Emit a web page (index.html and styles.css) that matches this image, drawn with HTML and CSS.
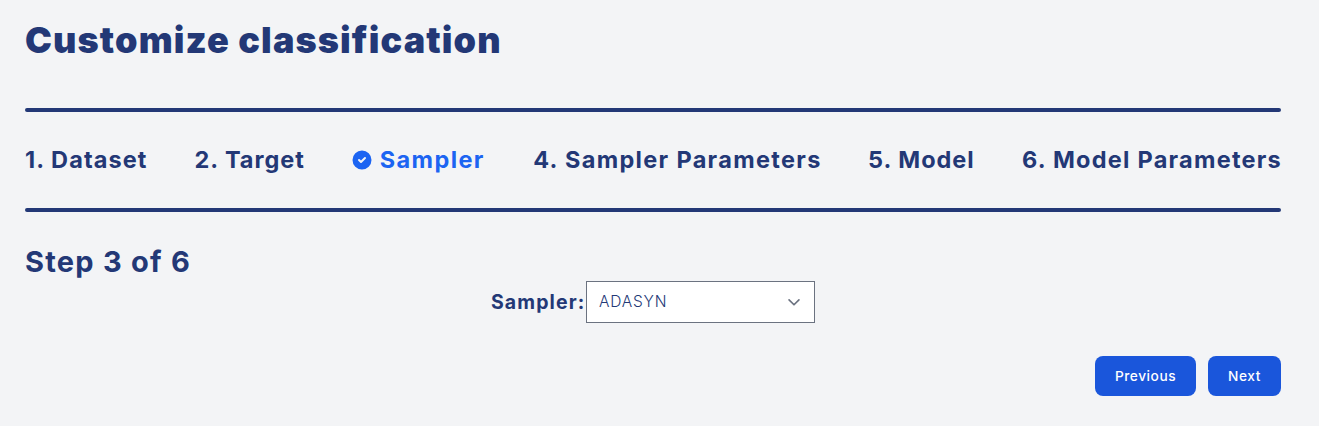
FILE: index.html
```html
<!DOCTYPE html>
<html lang="en">
<head>
<meta charset="utf-8">
<title>Customize classification</title>
<link rel="stylesheet" href="styles.css">
</head>
<body>
<main class="page">
  <h1 class="title">Customize classification</h1>
  <hr class="rule">
  <ol class="stepper">
    <li class="step dataset">1. Dataset</li>
    <li class="step target">2. Target</li>
    <li class="step current">
      <svg class="check" viewBox="0 0 20 20" aria-hidden="true"><path fill="currentColor" d="M10 .5a9.5 9.5 0 1 0 9.5 9.5A9.51 9.51 0 0 0 10 .5Zm3.707 8.207-4 4a1 1 0 0 1-1.414 0l-2-2a1 1 0 0 1 1.414-1.414L9 10.586l3.293-3.293a1 1 0 0 1 1.414 1.414Z"/></svg>
      <span class="name">Sampler</span>
    </li>
    <li class="step sampler-params">4. Sampler Parameters</li>
    <li class="step model">5. Model</li>
    <li class="step model-params">6. Model Parameters</li>
  </ol>
  <hr class="rule">
  <h2 class="progress">Step 3 of 6</h2>
  <div class="field">
    <label class="label" for="sampler">Sampler:</label>
    <div class="select-box">
      <select class="select" id="sampler"><option>ADASYN</option></select>
      <svg class="chevron" viewBox="0 0 20 20" aria-hidden="true"><path fill="none" stroke="#6b7280" stroke-linecap="round" stroke-linejoin="round" stroke-width="1.5" d="m5.5 8 4.5 4.5L14.500 8"/></svg>
    </div>
  </div>
  <div class="actions">
    <button class="button previous" type="button">Previous</button>
    <button class="button next" type="button">Next</button>
  </div>
</main>
</body>
</html>
```
FILE: styles.css
```css
* { box-sizing: border-box; }
body {
  margin: 0;
  background: #f3f4f6;
  color: #233876;
  font-family: Inter, "Liberation Sans", sans-serif;
}
.page { padding: 20px 38px 0 25px; }
.title {
  margin: 0;
  height: 88px;
  font-size: 36px;
  line-height: 40px;
  font-weight: 900;
  letter-spacing: 1.13px;
  white-space: nowrap;
}
.rule {
  margin: 0;
  height: 4px;
  border: 0;
  border-radius: 2px;
  background: #233876;
}
.stepper {
  display: flex;
  justify-content: space-between;
  align-items: center;
  height: 96px;
  margin: 0;
  padding: 0;
  list-style: none;
}
.step {
  display: flex;
  align-items: center;
  font-size: 23.5px;
  line-height: 32px;
  font-weight: 700;
  white-space: nowrap;
}
.dataset { width: 121.500px; letter-spacing: 1.1px; }
.target { width: 110px; letter-spacing: 1px; }
.current { width: 133px; letter-spacing: 1.4px; color: #1c64f2; }
.sampler-params { width: 287px; letter-spacing: 1.33px; }
.model { width: 106px; letter-spacing: 1px; }
.model-params { width: 259px; letter-spacing: 1.25px; }
.check { width: 20px; height: 20px; margin-left: -0.5px; margin-right: 8px; flex: none; }
.progress {
  margin: 0;
  padding-top: 32px;
  height: 69px;
  font-size: 29px;
  line-height: 36px;
  font-weight: 700;
  letter-spacing: 1.25px;
  white-space: nowrap;
}
.field {
  display: flex;
  align-items: center;
  height: 42px;
  padding-left: 466px;
}
.label { width: 95px; font-size: 19.5px; font-weight: 700; letter-spacing: 1.1px; white-space: nowrap; }
.select-box { position: relative; width: 229px; height: 42px; }
.select {
  appearance: none;
  width: 100%;
  height: 100%;
  padding: 0 40px 1px 12px;
  border: 1px solid #6b7280;
  border-radius: 0;
  background: #fff;
  color: #233876;
  font-family: inherit;
  font-size: 15.5px;
  font-weight: 300;
  letter-spacing: 0.8px;
}
.chevron { position: absolute; top: 10px; right: 10px; width: 22px; height: 22px; pointer-events: none; }
.actions {
  display: flex;
  justify-content: flex-end;
  gap: 12px;
  padding-top: 33px;
}
.button {
  height: 40px;
  padding: 0;
  border: 0;
  border-radius: 8px;
  background: #1a56db;
  color: #fff;
  font-family: inherit;
  font-size: 13.7px;
  font-weight: 500;
  letter-spacing: 0.55px;
}
.previous { width: 101px; }
.next { width: 73px; }
```
